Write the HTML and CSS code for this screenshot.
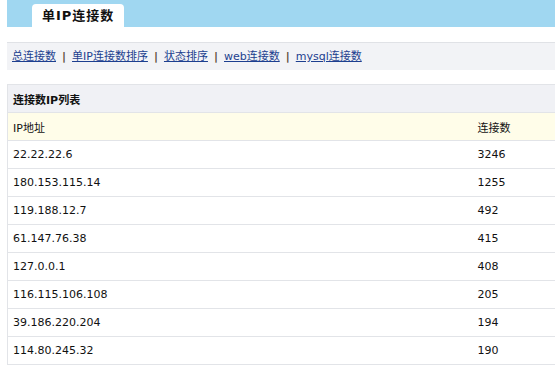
FILE: index.html
```html
<!DOCTYPE html>
<html lang="zh-cn">
<head>
    <meta charset="UTF-8">
    <title>单IP连接数</title>
    <link rel="stylesheet" href="styles.css">
</head>
<body>
    <div class="page">
        <div class="tab-bar">
            <div class="tab">单IP连接数</div>
        </div>

        <div class="nav">
            <a href="#">总连接数</a><span class="sep">|</span><a href="#">单IP连接数排序</a><span class="sep">|</span><a href="#">状态排序</a><span class="sep">|</span><a href="#">web连接数</a><span class="sep">|</span><a href="#">mysql连接数</a>
        </div>

        <table class="ip-table">
            <tr class="title-row">
                <th colspan="2">连接数IP列表</th>
            </tr>
            <tr class="head-row">
                <td class="col-ip">IP地址</td>
                <td>连接数</td>
            </tr>
            <tr><td>22.22.22.6</td><td>3246</td></tr>
            <tr><td>180.153.115.14</td><td>1255</td></tr>
            <tr><td>119.188.12.7</td><td>492</td></tr>
            <tr><td>61.147.76.38</td><td>415</td></tr>
            <tr><td>127.0.0.1</td><td>408</td></tr>
            <tr><td>116.115.106.108</td><td>205</td></tr>
            <tr><td>39.186.220.204</td><td>194</td></tr>
            <tr><td>114.80.245.32</td><td>190</td></tr>
        </table>
    </div>
</body>
</html>
```

FILE: styles.css
```css
* {
    margin: 0;
    padding: 0;
    box-sizing: border-box;
}

body {
    font-family: "DejaVu Sans", "Noto Sans CJK SC", sans-serif;
    font-size: 11px;
    color: #111;
    background: #fff;
    overflow: hidden;
}

.page {
    padding-left: 7px;
}

.tab-bar {
    background-color: #a0d7f1;
    height: 27px;
    padding-left: 25px;
    display: flex;
    align-items: flex-end;
}

.tab {
    background-color: #fff;
    height: 23px;
    line-height: 24px;
    padding: 0 10px;
    border-radius: 4px 4px 0 0;
    font-size: 13px;
    font-weight: bold;
    letter-spacing: 1px;
    color: #111;
}

.nav {
    margin-top: 15px;
    height: 28px;
    line-height: 27px;
    background-color: #f2f3f6;
    border-top: 1px solid #e0e2e6;
    padding-left: 5px;
}

.nav a {
    color: #1d3f8f;
    text-decoration: underline;
}

.nav .sep {
    margin: 0 6px;
    color: #5a4a3a;
    font-weight: bold;
}

.ip-table {
    margin-top: 14px;
    width: 100%;
    border-collapse: collapse;
    border-left: 1px solid #e2e4e8;
    border-top: 1px solid #e2e4e8;
}

.ip-table th,
.ip-table td {
    height: 28px;
    padding: 0 5px;
    text-align: left;
    border-bottom: 1px solid #e2e4e8;
    vertical-align: middle;
}

.title-row th {
    background-color: #f0f1f5;
    font-weight: bold;
}

.head-row td {
    background-color: #fffde9;
}

.col-ip {
    width: 465px;
}
```
